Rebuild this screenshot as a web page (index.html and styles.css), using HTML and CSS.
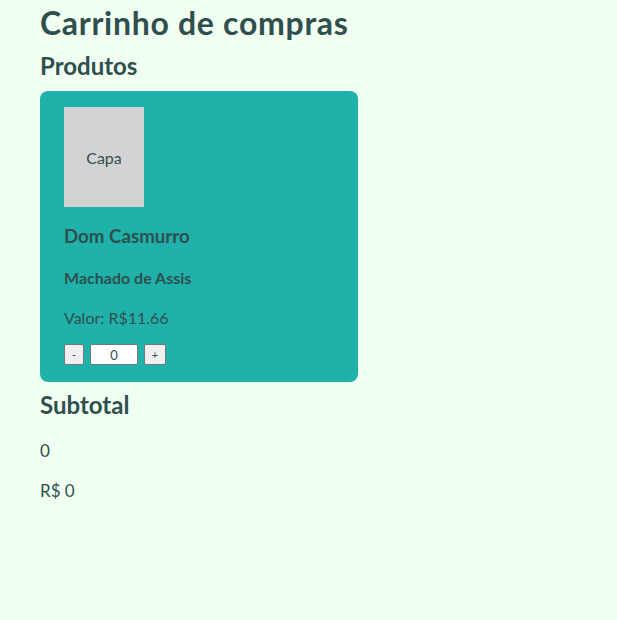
FILE: index.html
```html
<!DOCTYPE html>
<html lang="pt-BR">
<head>
<meta charset="utf-8">
<title>Carrinho de compras</title>
<link rel="stylesheet" href="styles.css">
</head>
<body>
<h1 class="title">Carrinho de compras</h1>
<h2 class="section">Produtos</h2>
<div class="card">
  <div class="cover">Capa</div>
  <h3 class="book-title">Dom Casmurro</h3>
  <h4 class="author">Machado de Assis</h4>
  <p class="price">Valor: R$11.66</p>
  <div class="qty">
    <button class="btn btn-minus">-</button>
    <input class="qty-input" type="text" value="0">
    <button class="btn btn-plus">+</button>
  </div>
</div>
<h2 class="section subtotal">Subtotal</h2>
<p class="line count">0</p>
<p class="line total">R$ 0</p>
</body>
</html>
```
FILE: styles.css
```css
html, body {
  margin: 0;
  padding: 0;
}
body {
  background: #f0fff0;
  color: #2f4f4f;
  font-family: "Lato", "Noto Sans", sans-serif;
  padding: 0 40px;
}
.title {
  margin: 3px 0 0;
  font-size: 32px;
  line-height: 40px;
  font-weight: 700;
  letter-spacing: 0.7px;
}
.section {
  margin: 8px 0 0;
  font-size: 24px;
  line-height: 30px;
  font-weight: 700;
}
.card {
  margin-top: 10px;
  width: 318px;
  box-sizing: border-box;
  background: #20b2aa;
  border-radius: 8px;
  padding: 16px 24px 17px;
}
.cover {
  width: 80px;
  height: 100px;
  background: #d3d3d3;
  display: flex;
  align-items: center;
  justify-content: center;
  font-size: 16px;
}
.book-title {
  margin: 17px 0 0;
  font-size: 18.72px;
  line-height: 24px;
  font-weight: 700;
}
.author {
  margin: 21px 0 0;
  font-size: 16px;
  line-height: 18px;
  font-weight: 700;
}
.price {
  margin: 21px 0 0;
  font-size: 16px;
  line-height: 20px;
}
.qty {
  margin-top: 16px;
  display: flex;
  gap: 6px;
  height: 21px;
}
.btn {
  box-sizing: border-box;
  height: 21px;
  padding: 0;
  border: 1px solid #767676;
  border-radius: 2px;
  background: #efefef;
  color: #2f4f4f;
  font-family: inherit;
  font-size: 11px;
}
.btn-minus { width: 20px; }
.btn-plus { width: 22px; }
.qty-input {
  box-sizing: border-box;
  width: 48px;
  height: 21px;
  margin: 0;
  padding: 0;
  border: 1px solid #767676;
  border-radius: 2px;
  background: #fff;
  color: #2f4f4f;
  text-align: center;
  font-family: inherit;
  font-size: 13px;
}
.subtotal {
  margin-top: 8px;
}
.line {
  margin: 21px 0 0;
  font-size: 17px;
  line-height: 20px;
}
.total {
  margin-top: 20px;
}
```
